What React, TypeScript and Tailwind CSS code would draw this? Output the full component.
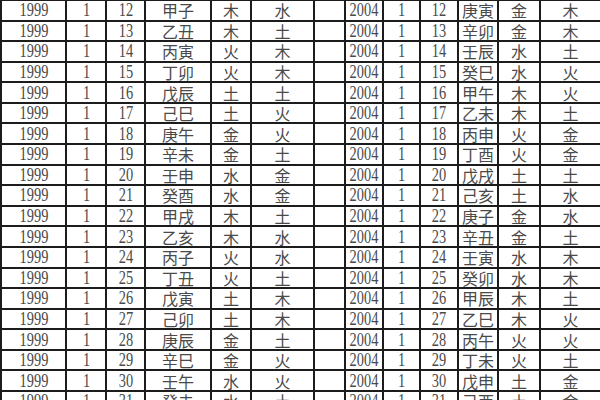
const stems = ["甲", "乙", "丙", "丁", "戊", "己", "庚", "辛", "壬", "癸"];
const branches = ["子", "丑", "寅", "卯", "辰", "巳", "午", "未", "申", "酉", "戌", "亥"];
const stemEl = ["木", "木", "火", "火", "土", "土", "金", "金", "水", "水"];
const branchEl = ["水", "土", "木", "木", "土", "火", "火", "土", "金", "金", "土", "水"];

// row for day 12 starts at 甲子 (1999) and 庚寅 (2004)
const rows = Array.from({ length: 20 }, (_, i) => {
  const day = 12 + i;
  const a = i;
  const b = 26 + i;
  return {
    day,
    left: [stems[a % 10] + branches[a % 12], stemEl[a % 10], branchEl[a % 12]],
    right: [stems[b % 10] + branches[b % 12], stemEl[b % 10], branchEl[b % 12]],
  };
});

function Num({ v }: { v: string | number }) {
  return (
    <span className="inline-block scale-x-[0.8] font-['Liberation_Serif',serif] text-[18px] leading-[18px]">
      {v}
    </span>
  );
}

function Cjk({ v }: { v: string }) {
  return (
    <span className="font-['Noto_Sans_CJK_TC','Noto_Sans_CJK_SC',sans-serif] text-[16px] leading-[18px]">
      {v}
    </span>
  );
}

function Cell({ children }: { children?: React.ReactNode }) {
  return <div className="flex items-center justify-center overflow-hidden bg-white">{children}</div>;
}

export default function App() {
  return (
    <div className="h-[400px] w-[600px] overflow-hidden bg-[#1c1c1c]">
      <div className="grid grid-cols-[63px_38px_37px_64px_38px_61px_29px_36px_35px_36px_38px_40px_59px] auto-rows-[18.58px] gap-[2px] pl-[2px] pt-[1px] text-[#4a4a4a]">
        {rows.map((r) => (
          <div key={r.day} className="contents">
            <Cell><Num v="1999" /></Cell>
            <Cell><Num v="1" /></Cell>
            <Cell><Num v={r.day} /></Cell>
            <Cell><Cjk v={r.left[0]} /></Cell>
            <Cell><Cjk v={r.left[1]} /></Cell>
            <Cell><Cjk v={r.left[2]} /></Cell>
            <Cell />
            <Cell><Num v="2004" /></Cell>
            <Cell><Num v="1" /></Cell>
            <Cell><Num v={r.day} /></Cell>
            <Cell><Cjk v={r.right[0]} /></Cell>
            <Cell><Cjk v={r.right[1]} /></Cell>
            <Cell><Cjk v={r.right[2]} /></Cell>
          </div>
        ))}
      </div>
    </div>
  );
}
